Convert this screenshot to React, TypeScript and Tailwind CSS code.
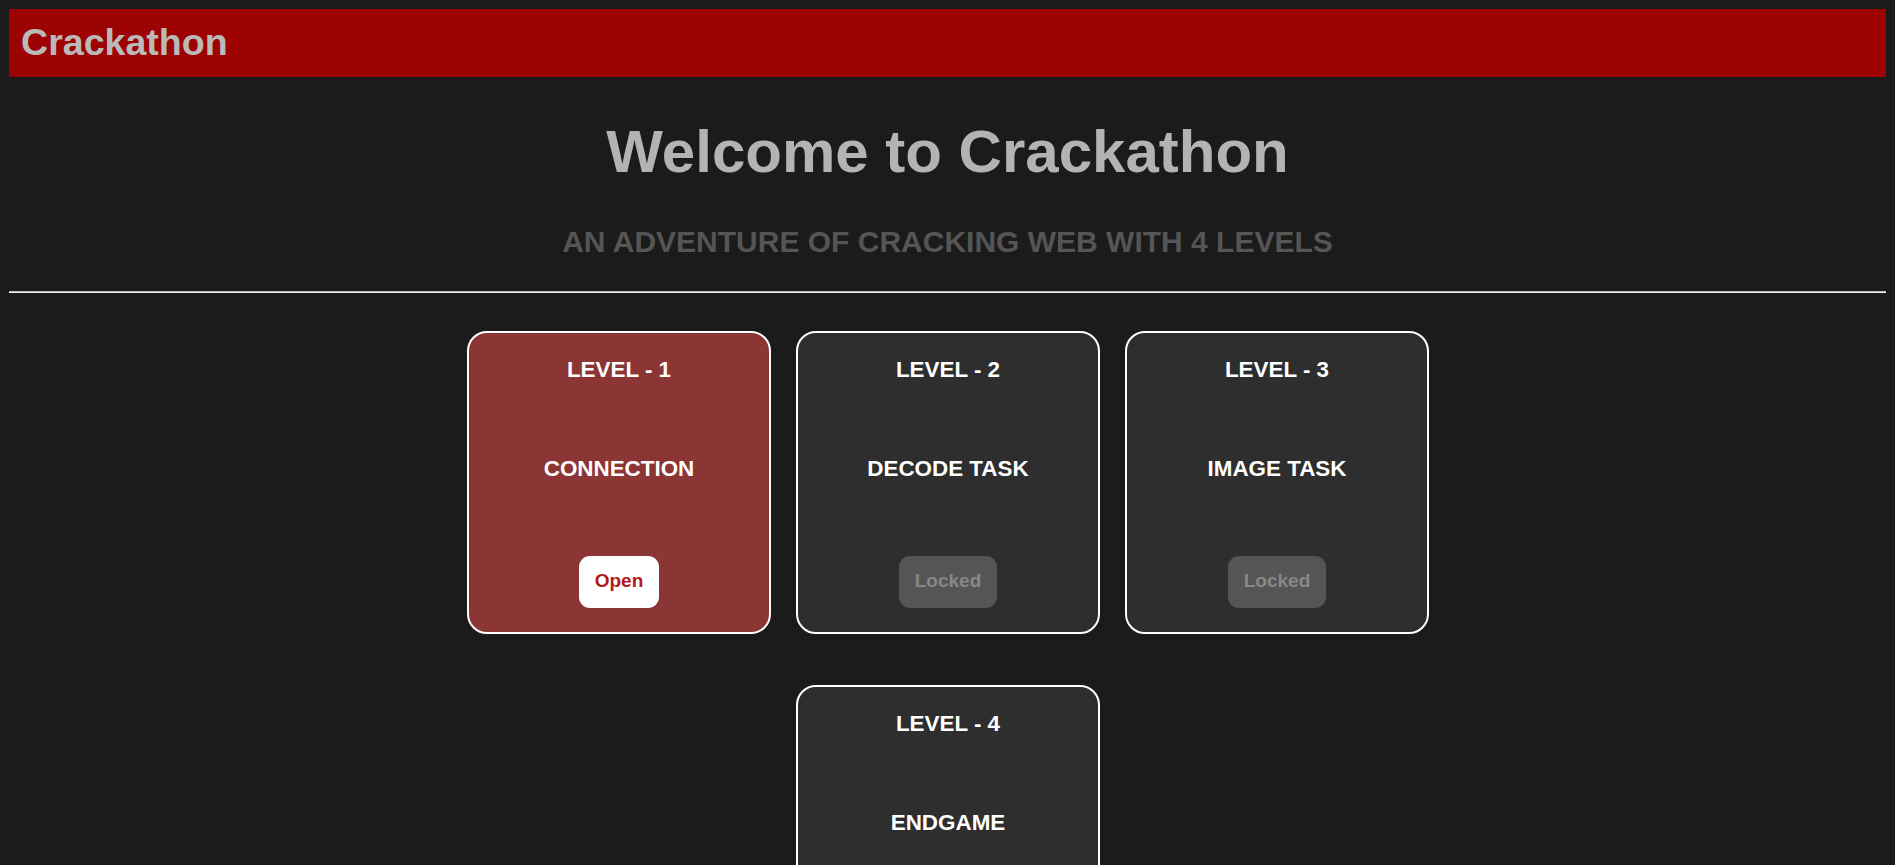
const levels = [
  { level: 1, title: "CONNECTION", open: true },
  { level: 2, title: "DECODE TASK", open: false },
  { level: 3, title: "IMAGE TASK", open: false },
  { level: 4, title: "ENDGAME", open: false },
]

const LevelCard: React.FC<{ level: number; title: string; open: boolean }> = ({
  level,
  title,
  open,
}) => {
  return (
    <div
      className={`flex h-[303px] w-[304px] flex-col items-center justify-between rounded-[20px] border-2 border-white pt-[24px] pb-[24px] text-center ${
        open ? "bg-[#8b3535]" : "bg-[#2e2e2e]"
      }`}
    >
      <h3 className="text-[22.4px] font-bold leading-[1.15] text-white">LEVEL - {level}</h3>
      <h2 className="text-[22.4px] font-bold leading-[1.15] text-white">{title}</h2>
      {open ? (
        <button className="h-[52px] rounded-[11px] bg-white px-[16px] text-[19px] font-bold text-[#b3181c]">
          Open
        </button>
      ) : (
        <button className="h-[52px] rounded-[11px] bg-[#555555] px-[16px] text-[19px] font-bold text-[#888888]">
          Locked
        </button>
      )}
    </div>
  )
}

export default function App() {
  return (
    <div className="min-h-screen bg-[#1b1b1b] p-[9px] font-['Liberation_Sans',Arial,sans-serif]">
      <header className="flex h-[68px] items-center bg-[#9e0303] px-[12px]">
        <h1 className="text-[37.6px] font-bold leading-[1.15] text-[#bababa]">Crackathon</h1>
      </header>

      <h1 className="mt-[40px] text-center text-[60px] font-bold leading-[1.15] text-[#b3b3b3]">
        Welcome to Crackathon
      </h1>
      <h2 className="mt-[39px] text-center text-[30px] font-bold leading-[1.15] text-[#555555]">
        AN ADVENTURE OF CRACKING WEB WITH 4 LEVELS
      </h2>

      <div className="mt-[31px] border-t border-b border-t-[#bdbdbd] border-b-[#eeeeee]" />

      <div className="mx-auto mt-[38px] flex max-w-[1000px] flex-wrap justify-center gap-x-[25px] gap-y-[51px] pl-[1px]">
        {levels.map((l) => (
          <LevelCard key={l.level} level={l.level} title={l.title} open={l.open} />
        ))}
      </div>
    </div>
  )
}
